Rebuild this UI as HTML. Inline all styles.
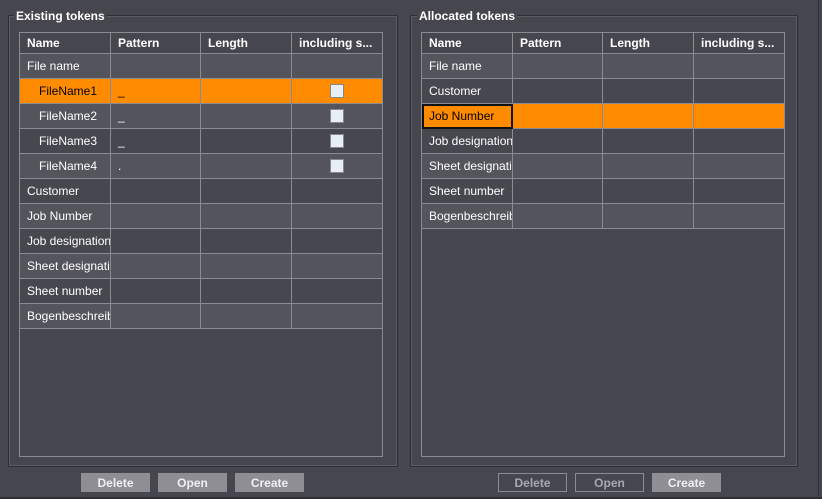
<!DOCTYPE html><html><head><style>
body{margin:0;width:822px;height:499px;background:#46464e;font-family:"Liberation Sans",sans-serif;position:relative;overflow:hidden}
.grp{position:absolute;border:1px solid #2e2e34;box-shadow:inset 0 0 0 1px #5a5a62}
.lbl{position:absolute;font-size:12px;font-weight:bold;color:#fff;background:#46464e;padding:0 2px}
table{position:absolute;border-collapse:collapse;font-size:12px;color:#fff;table-layout:fixed}
td,th{border:1px solid #8a8a92;height:24px;padding:0 0 0 7px;white-space:nowrap;overflow:hidden;text-align:left}
th{height:20px;font-weight:bold}
tr.a td{background:#53545c}tr.b td{background:#47484f}
tr.s td{background:#ff8c00;color:#000}
.tb{position:absolute;border:1px solid #8a8a92;background:#46464e}
.cb{display:inline-block;width:12px;height:12px;background:#e8eef6;border:1px solid #888;vertical-align:middle}
.btn{position:absolute;top:473px;height:19px;width:69px;font-size:12px;font-weight:bold;text-align:center;line-height:20px;box-sizing:border-box}
.f{background:#8e8e94;color:#eef0f6}.o{border:1px solid #8a8a92;color:#a8a8b0;line-height:18px}
</style></head><body>
<div class="grp" style="left:8px;top:15px;width:388px;height:450px"></div>
<div class="lbl" style="left:14px;top:9px">Existing tokens</div>
<div class="tb" style="left:19px;top:32px;width:362px;height:423px"></div>
<table style="left:19px;top:32px;width:364px">
<col style="width:91px"><col style="width:90px"><col style="width:91px"><col style="width:91px">
<tr class="b"><th>Name</th><th>Pattern</th><th>Length</th><th>including s...</th></tr>
<tr class="a"><td>File name</td><td></td><td></td><td></td></tr>
<tr class="s"><td style="padding-left:19px">FileName1</td><td>_</td><td></td><td style="text-align:center;padding:0"><span class="cb"></span></td></tr>
<tr class="a"><td style="padding-left:19px">FileName2</td><td>_</td><td></td><td style="text-align:center;padding:0"><span class="cb"></span></td></tr>
<tr class="b"><td style="padding-left:19px">FileName3</td><td>_</td><td></td><td style="text-align:center;padding:0"><span class="cb"></span></td></tr>
<tr class="a"><td style="padding-left:19px">FileName4</td><td>.</td><td></td><td style="text-align:center;padding:0"><span class="cb"></span></td></tr>
<tr class="b"><td>Customer</td><td></td><td></td><td></td></tr>
<tr class="a"><td>Job Number</td><td></td><td></td><td></td></tr>
<tr class="b"><td>Job designation</td><td></td><td></td><td></td></tr>
<tr class="a"><td>Sheet designation</td><td></td><td></td><td></td></tr>
<tr class="b"><td>Sheet number</td><td></td><td></td><td></td></tr>
<tr class="a"><td>Bogenbeschreibung</td><td></td><td></td><td></td></tr>
</table>
<div class="grp" style="left:410px;top:15px;width:386px;height:450px"></div>
<div class="lbl" style="left:417px;top:9px">Allocated tokens</div>
<div class="tb" style="left:421px;top:32px;width:362px;height:423px"></div>
<table style="left:421px;top:32px;width:364px">
<col style="width:91px"><col style="width:90px"><col style="width:91px"><col style="width:91px">
<tr class="b"><th>Name</th><th>Pattern</th><th>Length</th><th>including s...</th></tr>
<tr class="a"><td>File name</td><td></td><td></td><td></td></tr>
<tr class="b"><td>Customer</td><td></td><td></td><td></td></tr>
<tr class="s"><td style="outline:2px solid #111;outline-offset:-2px">Job Number</td><td></td><td></td><td></td></tr>
<tr class="b"><td>Job designation</td><td></td><td></td><td></td></tr>
<tr class="a"><td>Sheet designation</td><td></td><td></td><td></td></tr>
<tr class="b"><td>Sheet number</td><td></td><td></td><td></td></tr>
<tr class="a"><td>Bogenbeschreibung</td><td></td><td></td><td></td></tr>
</table>
<div class="btn f" style="left:81px">Delete</div>
<div class="btn f" style="left:158px">Open</div>
<div class="btn f" style="left:235px">Create</div>
<div class="btn o" style="left:498px">Delete</div>
<div class="btn o" style="left:575px">Open</div>
<div class="btn f" style="left:652px">Create</div>
<div style="position:absolute;left:818px;top:0;width:1px;height:499px;background:#2e2e34"></div>
<div style="position:absolute;left:0;top:497px;width:822px;height:2px;background:#2e2e34"></div>
</body></html>
